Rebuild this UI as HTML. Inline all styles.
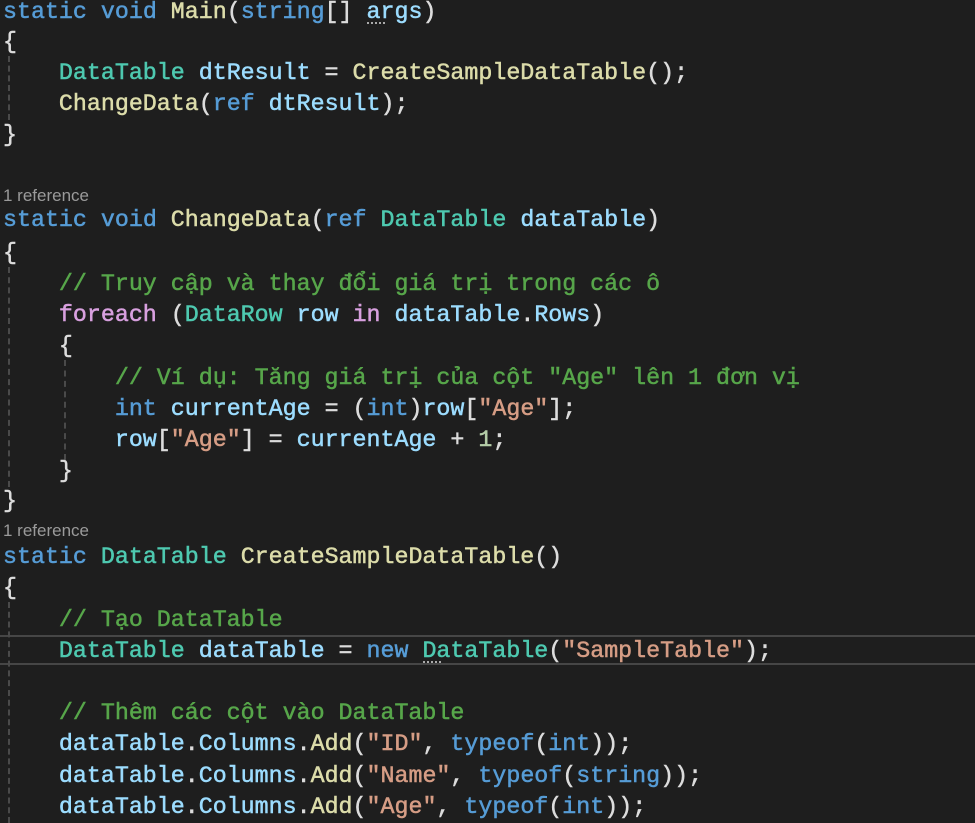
<!DOCTYPE html>
<html><head><meta charset="utf-8"><style>
body{margin:0;width:975px;height:823px;background:#1e1e1e;overflow:hidden;position:relative;font-family:"Liberation Mono","Noto Sans CJK SC",monospace;font-size:23.3px;color:#dcdcdc}
.l{position:absolute;left:3px;height:31px;line-height:31px;white-space:pre;-webkit-text-stroke:0.5px currentColor;margin-top:2px}
.r{position:absolute;left:3px;font-family:"Liberation Sans",sans-serif;font-size:17px;color:#9a9a9a;line-height:20px}
.k{color:#569cd6}.t{color:#4ec9b0}.m{color:#dcdcaa}.v{color:#9cdcfe}.s{color:#d69d85}.c{color:#57a64a}.f{color:#d8a0df}.n{color:#b5cea8}
.g{position:absolute;width:0;border-left:2px dashed #4a4a4a}
.hl{position:absolute;left:0;width:975px;height:26px;top:635px;border-top:2px solid #464646;border-bottom:2px solid #464646}
.d{position:absolute;height:2px;border-top:2px dotted #aaa;width:18px}
</style></head><body>
<div class="hl"></div>
<div class="g" style="left:8px;top:56px;height:64px"></div>
<div class="g" style="left:8px;top:267px;height:220px"></div>
<div class="g" style="left:8px;top:602px;height:221px"></div>
<div class="g" style="left:64px;top:360px;height:100px"></div>
<div class="d" style="left:367px;top:22px"></div>
<div class="d" style="left:423px;top:661px"></div>
<div class="l" style="top:-5px"><span class="k">static</span> <span class="k">void</span> <span class="m">Main</span>(<span class="k">string</span>[] <span class="v">args</span>)</div>
<div class="l" style="top:25px">{</div>
<div class="l" style="top:56px">    <span class="t">DataTable</span> <span class="v">dtResult</span> = <span class="m">CreateSampleDataTable</span>();</div>
<div class="l" style="top:87px">    <span class="m">ChangeData</span>(<span class="k">ref</span> <span class="v">dtResult</span>);</div>
<div class="l" style="top:118px">}</div>
<div class="r" style="top:186px">1 reference</div>
<div class="l" style="top:203px"><span class="k">static</span> <span class="k">void</span> <span class="m">ChangeData</span>(<span class="k">ref</span> <span class="t">DataTable</span> <span class="v">dataTable</span>)</div>
<div class="l" style="top:236px">{</div>
<div class="l" style="top:267px">    <span class="c">// Truy cập và thay đổi giá trị trong các ô</span></div>
<div class="l" style="top:298px">    <span class="f">foreach</span> (<span class="t">DataRow</span> <span class="v">row</span> <span class="f">in</span> <span class="v">dataTable</span>.<span class="v">Rows</span>)</div>
<div class="l" style="top:329px">    {</div>
<div class="l" style="top:361px">        <span class="c">// Ví dụ: Tăng giá trị của cột "Age" lên 1 đơn vị</span></div>
<div class="l" style="top:392px">        <span class="k">int</span> <span class="v">currentAge</span> = (<span class="k">int</span>)<span class="v">row</span>[<span class="s">"Age"</span>];</div>
<div class="l" style="top:423px">        <span class="v">row</span>[<span class="s">"Age"</span>] = <span class="v">currentAge</span> + <span class="n">1</span>;</div>
<div class="l" style="top:454px">    }</div>
<div class="l" style="top:484px">}</div>
<div class="r" style="top:521px">1 reference</div>
<div class="l" style="top:540px"><span class="k">static</span> <span class="t">DataTable</span> <span class="m">CreateSampleDataTable</span>()</div>
<div class="l" style="top:571px">{</div>
<div class="l" style="top:603px">    <span class="c">// Tạo DataTable</span></div>
<div class="l" style="top:634px">    <span class="t">DataTable</span> <span class="v">dataTable</span> = <span class="k">new</span> <span class="t">DataTable</span>(<span class="s">"SampleTable"</span>);</div>
<div class="l" style="top:696px">    <span class="c">// Thêm các cột vào DataTable</span></div>
<div class="l" style="top:727px">    <span class="v">dataTable</span>.<span class="v">Columns</span>.<span class="m">Add</span>(<span class="s">"ID"</span>, <span class="k">typeof</span>(<span class="k">int</span>));</div>
<div class="l" style="top:759px">    <span class="v">dataTable</span>.<span class="v">Columns</span>.<span class="m">Add</span>(<span class="s">"Name"</span>, <span class="k">typeof</span>(<span class="k">string</span>));</div>
<div class="l" style="top:790px">    <span class="v">dataTable</span>.<span class="v">Columns</span>.<span class="m">Add</span>(<span class="s">"Age"</span>, <span class="k">typeof</span>(<span class="k">int</span>));</div>
</body></html>
